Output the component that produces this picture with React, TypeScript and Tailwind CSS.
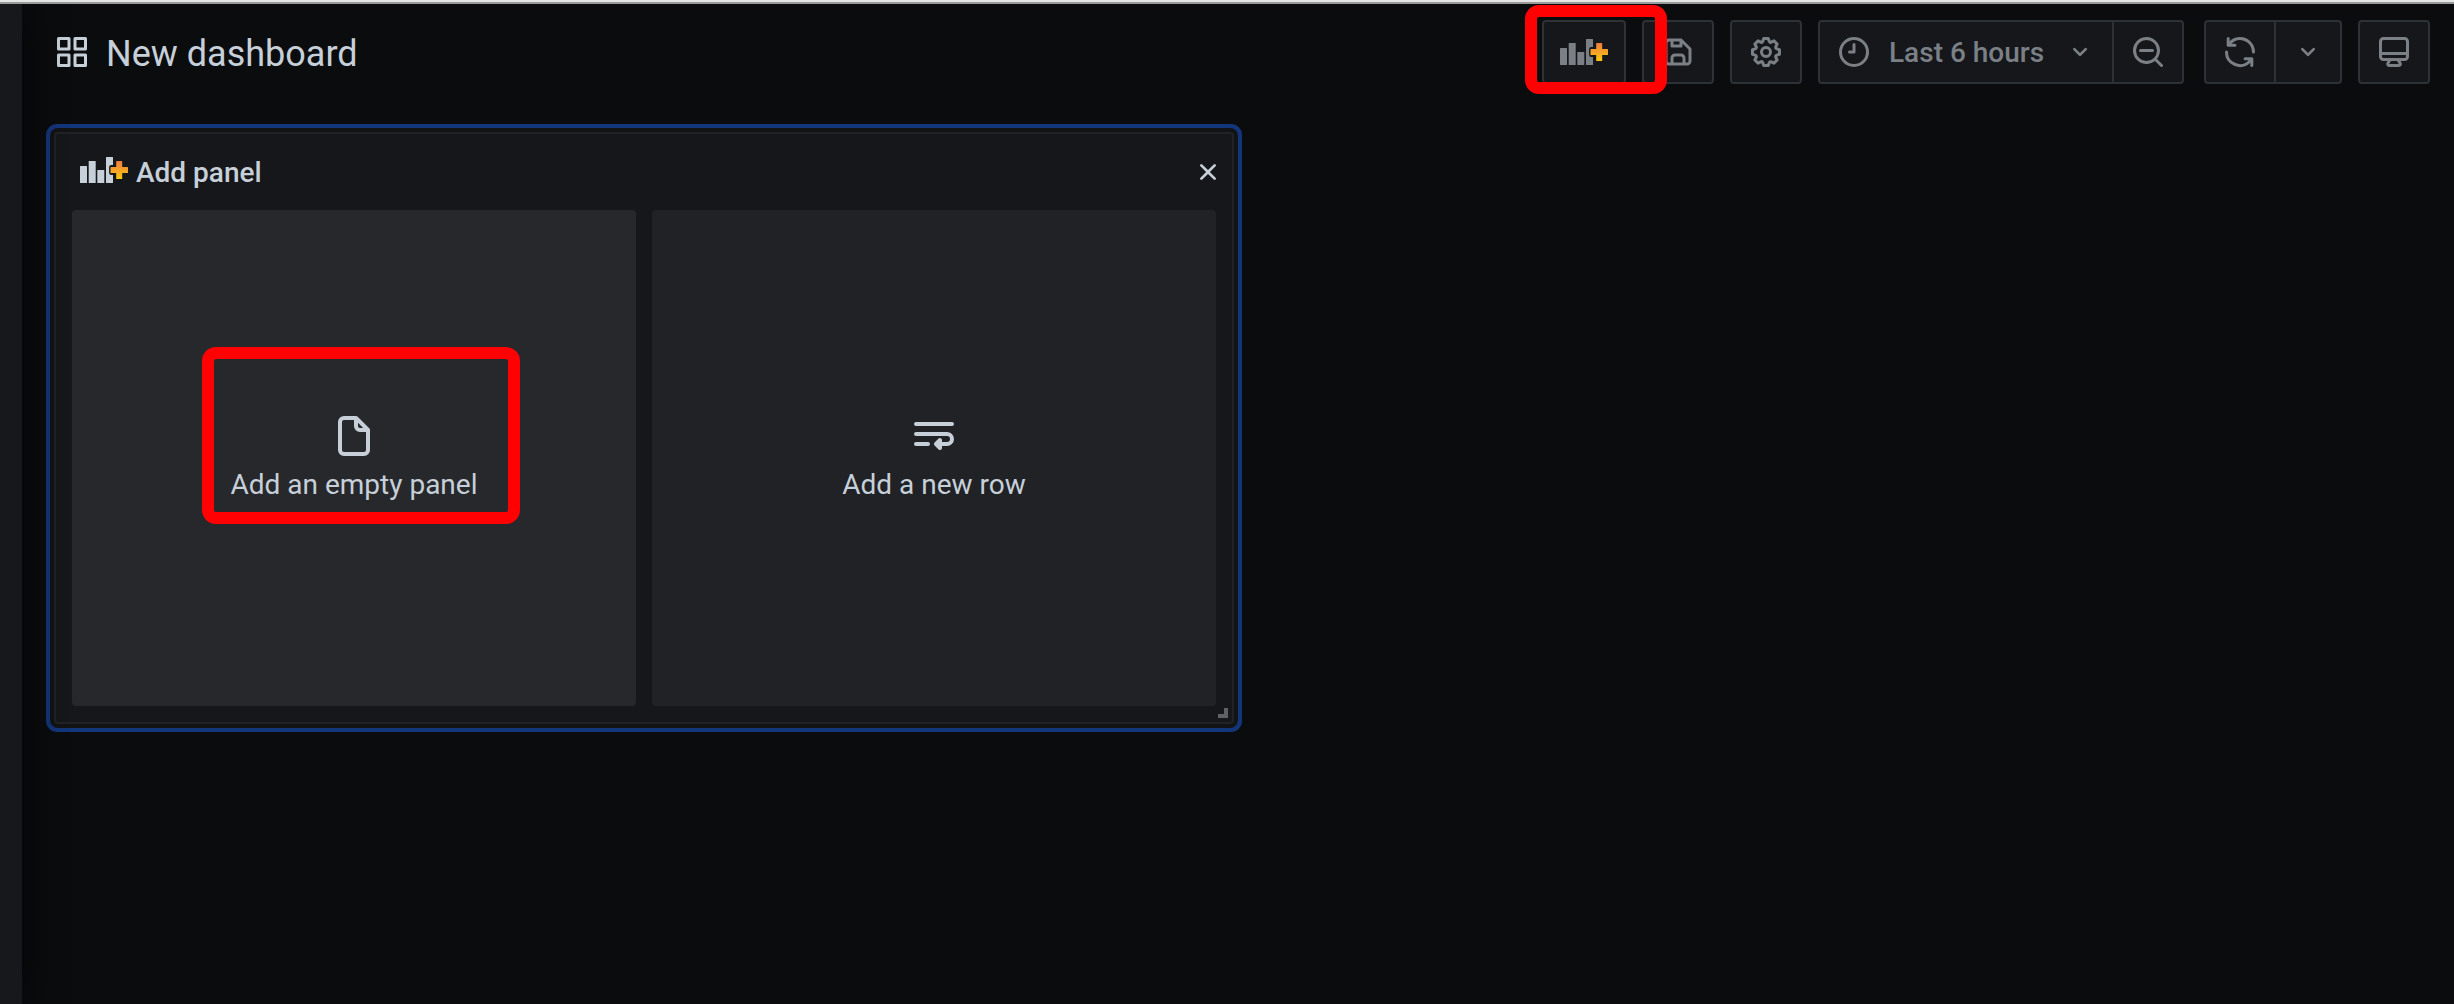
import React from 'react';
import clsx from 'clsx';

const icons = {
  apps: 'M10,13H3a1,1,0,0,0-1,1v7a1,1,0,0,0,1,1h7a1,1,0,0,0,1-1V14A1,1,0,0,0,10,13ZM9,20H4V15H9ZM21,2H14a1,1,0,0,0-1,1v7a1,1,0,0,0,1,1h7a1,1,0,0,0,1-1V3A1,1,0,0,0,21,2ZM20,9H15V4h5Zm1,4H14a1,1,0,0,0-1,1v7a1,1,0,0,0,1,1h7a1,1,0,0,0,1-1V14A1,1,0,0,0,21,13Zm-1,7H15V15h5ZM10,2H3A1,1,0,0,0,2,3v7a1,1,0,0,0,1,1h7a1,1,0,0,0,1-1V3A1,1,0,0,0,10,2ZM9,9H4V4H9Z',
  save: 'M20.71,9.29l-6-6a1,1,0,0,0-.32-.21A1.09,1.09,0,0,0,14,3H6A3,3,0,0,0,3,6V18a3,3,0,0,0,3,3H18a3,3,0,0,0,3-3V10A1,1,0,0,0,20.71,9.29ZM9,5h4V7H9Zm6,14H9V16a1,1,0,0,1,1-1h4a1,1,0,0,1,1,1Zm4-1a1,1,0,0,1-1,1H17V16a3,3,0,0,0-3-3H10a3,3,0,0,0-3,3v3H6a1,1,0,0,1-1-1V6A1,1,0,0,1,6,5H7V8A1,1,0,0,0,8,9h6a1,1,0,0,0,1-1V6.41l4,4Z',
  cog: 'M21.32,9.55l-1.89-.63.89-1.78A1,1,0,0,0,20.13,6L18,3.87a1,1,0,0,0-1.15-.19l-1.78.89-.63-1.89A1,1,0,0,0,13.5,2h-3a1,1,0,0,0-.95.68L8.92,4.57,7.14,3.68A1,1,0,0,0,6,3.87L3.87,6a1,1,0,0,0-.19,1.15l.89,1.78-1.89.63A1,1,0,0,0,2,10.5v3a1,1,0,0,0,.68.95l1.89.63-.89,1.78A1,1,0,0,0,3.87,18L6,20.13a1,1,0,0,0,1.15.19l1.78-.89.63,1.89a1,1,0,0,0,.95.68h3a1,1,0,0,0,.95-.68l.63-1.89,1.78.89A1,1,0,0,0,18,20.13L20.13,18a1,1,0,0,0,.19-1.15l-.89-1.78,1.89-.63A1,1,0,0,0,22,13.5v-3A1,1,0,0,0,21.32,9.55ZM20,12.78l-1.2.4A2,2,0,0,0,17.64,16l.57,1.14-1.1,1.1L16,17.64a2,2,0,0,0-2.79,1.16l-.4,1.2H11.22l-.4-1.2A2,2,0,0,0,8,17.64l-1.14.57-1.1-1.1L6.36,16A2,2,0,0,0,5.2,13.18L4,12.78V11.22l1.2-.4A2,2,0,0,0,6.36,8L5.79,6.89l1.1-1.1L8,6.36A2,2,0,0,0,10.82,5.2l.4-1.2h1.56l.4,1.2A2,2,0,0,0,16,6.36l1.14-.57,1.1,1.1L17.64,8a2,2,0,0,0,1.16,2.79l1.2.4ZM12,8a4,4,0,1,0,4,4A4,4,0,0,0,12,8Zm0,6a2,2,0,1,1,2-2A2,2,0,0,1,12,14Z',
  clock: 'M12,2A10,10,0,1,0,22,12,10,10,0,0,0,12,2Zm0,18a8,8,0,1,1,8-8A8,8,0,0,1,12,20ZM12,6a1,1,0,0,0-1,1v4H9a1,1,0,0,0,0,2h3a1,1,0,0,0,1-1V7A1,1,0,0,0,12,6Z',
  angleDown: 'M17,9.17a1,1,0,0,0-1.41,0L12,12.71,8.46,9.17a1,1,0,0,0-1.41,0,1,1,0,0,0,0,1.42l4.24,4.24a1,1,0,0,0,1.42,0L17,10.59A1,1,0,0,0,17,9.17Z',
  searchMinus: 'M21.71,20.29,18,16.61A9,9,0,1,0,16.61,18l3.68,3.68a1,1,0,0,0,1.42,0A1,1,0,0,0,21.71,20.29ZM11,18a7,7,0,1,1,7-7A7,7,0,0,1,11,18Zm4-8H7a1,1,0,0,0,0,2h8a1,1,0,0,0,0-2Z',
  sync: 'M19.91,15.51H15.38a1,1,0,0,0,0,2h2.4A8,8,0,0,1,4,12a1,1,0,1,0-2,0,10,10,0,0,0,16.88,7.23V21a1,1,0,0,0,2,0V16.5A1,1,0,0,0,19.91,15.51ZM12,2A10,10,0,0,0,5.12,4.77V3a1,1,0,0,0-2,0V7.5a1,1,0,0,0,1,1h4.5a1,1,0,0,0,0-2H6.22A8,8,0,0,1,20,12a1,1,0,0,0,2,0A10,10,0,0,0,12,2Z',
  monitor: 'M19,2H5A3,3,0,0,0,2,5V15a3,3,0,0,0,3,3H7.64l-.58,1a2,2,0,0,0,0,2,2,2,0,0,0,1.75,1h6.46A2,2,0,0,0,17,21a2,2,0,0,0,0-2l-.59-1H19a3,3,0,0,0,3-3V5A3,3,0,0,0,19,2ZM8.77,20,10,18H14l1.2,2ZM20,15a1,1,0,0,1-1,1H5a1,1,0,0,1-1-1V14H20Zm0-3H4V5A1,1,0,0,1,5,4H19a1,1,0,0,1,1,1Z',
  file: 'M20,8.94a1.31,1.31,0,0,0-.06-.27l0-.09a1.07,1.07,0,0,0-.19-.28h0l-6-6h0a1.07,1.07,0,0,0-.28-.19l-.1,0A1.1,1.1,0,0,0,13.06,2H7A3,3,0,0,0,4,5V19a3,3,0,0,0,3,3H17a3,3,0,0,0,3-3V9S20,9,20,8.94ZM14,5.41,16.59,8H15a1,1,0,0,1-1-1ZM18,19a1,1,0,0,1-1,1H7a1,1,0,0,1-1-1V5A1,1,0,0,1,7,4h5V7a3,3,0,0,0,3,3h3Z',
  wrapText: 'M3,7H21a1,1,0,0,0,0-2H3A1,1,0,0,0,3,7ZM9,15H3a1,1,0,0,0,0,2H9a1,1,0,0,0,0-2ZM18.5,10H3a1,1,0,0,0,0,2H18.5a1.5,1.5,0,0,1,0,3H16v-1a1,1,0,0,0-1.71-.71l-2,2a1,1,0,0,0,0,1.42l2,2A1,1,0,0,0,16,18V17h2.5a3.5,3.5,0,0,0,0-7Z',
  times: 'M13.41,12l4.3-4.29a1,1,0,1,0-1.42-1.42L12,10.59,7.71,6.29A1,1,0,0,0,6.29,7.71L10.59,12l-4.3,4.29a1,1,0,0,0,0,1.42,1,1,0,0,0,1.42,0L12,13.41l4.29,4.3a1,1,0,0,0,1.42,0,1,1,0,0,0,0-1.42Z',
};

interface IconProps {
  name: keyof typeof icons;
  className?: string;
}

function Icon({ name, className = 'size-9' }: IconProps) {
  return (
    <svg className={clsx('shrink-0', className)} viewBox="0 0 24 24" fill="currentColor">
      <path d={icons[name]} />
    </svg>
  );
}

interface PanelAddIconProps {
  id: string;
  className?: string;
}

function PanelAddIcon({ id, className }: PanelAddIconProps) {
  return (
    <svg className={clsx('h-[26px] w-12 shrink-0', className)} viewBox="0 0 48 26" fill="currentColor">
      <defs>
        <linearGradient id={id} x1="0" y1="0" x2="0" y2="1">
          <stop offset="0" stopColor="#ee7c41" />
          <stop offset="1" stopColor="#fcc90d" />
        </linearGradient>
      </defs>
      <rect x="0" y="9" width="7" height="17" rx="0.5" />
      <rect x="8.7" y="4" width="7" height="22" rx="0.5" />
      <rect x="17.3" y="13" width="7" height="13" rx="0.5" />
      <path d="M26.5,0H32.5a.5,.5,0,0,1,.5,.5V8H31.3a2.2,2.2,0,0,0-2.2,2.2v5.6a2.2,2.2,0,0,0,2.2,2.2H33v7.5a.5,.5,0,0,1-.5,.5H26.5a.5,.5,0,0,1-.5-.5V.5A.5,.5,0,0,1,26.5,0Z" />
      <path
        fill={`url(#${id})`}
        d="M36.7,4h5a.5,.5,0,0,1,.5,.5V10h5.3a.5,.5,0,0,1,.5,.5v5a.5,.5,0,0,1-.5,.5H42.2v5.5a.5,.5,0,0,1-.5,.5h-5a.5,.5,0,0,1-.5-.5V16H31a.5,.5,0,0,1-.5-.5v-5A.5,.5,0,0,1,31,10h5.2V4.5A.5,.5,0,0,1,36.7,4Z"
      />
    </svg>
  );
}

interface ToolbarButtonProps {
  children: React.ReactNode;
  className?: string;
}

function ToolbarButton({ children, className = 'w-18 rounded' }: ToolbarButtonProps) {
  return (
    <button
      className={clsx(
        'flex h-16 items-center justify-center border-2 border-[#2c3235] bg-[#15171a] text-[#7b8087]',
        className
      )}
    >
      {children}
    </button>
  );
}

function Highlight({ className }: { className: string }) {
  return (
    <div
      className={clsx(
        'pointer-events-none absolute rounded-[14px] border-12 border-[#ff0003]',
        className
      )}
    />
  );
}

function Header() {
  return (
    <header className="flex items-center justify-between pt-4 pr-6 pl-8">
      <div className="flex items-center gap-4 text-[#c7d0d9]">
        <Icon name="apps" />
        <h1 className="pt-[3px] text-4xl leading-none">New dashboard</h1>
      </div>

      <div className="flex items-center">
        <div className="relative mr-4 flex gap-4">
          <ToolbarButton className="w-21 rounded">
            <PanelAddIcon id="toolbar-plus" />
          </ToolbarButton>
          <ToolbarButton>
            <Icon name="save" />
          </ToolbarButton>
          <Highlight className="-top-[15px] -left-[17px] h-[89px] w-[142px]" />
        </div>
        <ToolbarButton className="mr-4 w-18 rounded">
          <Icon name="cog" />
        </ToolbarButton>

        {/* Time range + zoom out */}
        <div className="mr-5 flex">
          <ToolbarButton className="w-74 rounded-l px-4">
            <Icon name="clock" />
            <span className="ml-[17px] flex-1 pt-px text-left text-[28px] leading-none font-medium whitespace-nowrap">
              Last 6 hours
            </span>
            <Icon name="angleDown" className="size-8" />
          </ToolbarButton>
          <ToolbarButton className="-ml-0.5 w-18 rounded-r">
            <Icon name="searchMinus" />
          </ToolbarButton>
        </div>

        {/* Refresh + interval */}
        <div className="mr-4 flex">
          <ToolbarButton className="w-18 rounded-l">
            <Icon name="sync" />
          </ToolbarButton>
          <ToolbarButton className="-ml-0.5 w-17 rounded-r">
            <Icon name="angleDown" className="size-8" />
          </ToolbarButton>
        </div>

        <ToolbarButton>
          <Icon name="monitor" />
        </ToolbarButton>
      </div>
    </header>
  );
}

interface PanelOptionProps {
  icon: keyof typeof icons;
  label: string;
  active?: boolean;
  highlighted?: boolean;
}

function PanelOption({ icon, label, active, highlighted }: PanelOptionProps) {
  return (
    <div
      className={clsx(
        'relative flex flex-1 flex-col items-center justify-center rounded pt-0.5 text-[#c7d0d9]',
        active ? 'bg-[#26282c]' : 'bg-[#202226]'
      )}
    >
      <Icon name={icon} className="size-12" />
      <span className="mt-1 text-[28px] leading-[42px]">{label}</span>
      {highlighted && <Highlight className="top-[137px] left-[130px] h-[177px] w-[318px]" />}
    </div>
  );
}

function AddPanelWidget() {
  return (
    <section className="relative mt-12 ml-8 flex h-[592px] w-[1180px] flex-col rounded border-2 border-[#202226] bg-[#15171a] shadow-[0_0_0_4px_#121315,0_0_0_8px_#13357a]">
      <div className="flex h-19 items-center pr-3.5 pl-6 text-[#c7d0d9]">
        <PanelAddIcon id="widget-plus" className="mb-1" />
        <span className="ml-2 flex-1 pt-0.5 text-[28px] leading-none font-medium">Add panel</span>
        <Icon name="times" className="mr-[-6px] size-8" />
      </div>
      <div className="flex h-[496px] gap-4 px-4">
        <PanelOption icon="file" label="Add an empty panel" active highlighted />
        <PanelOption icon="wrapText" label="Add a new row" />
      </div>
      <span className="absolute right-1 bottom-1 size-2.5 border-r-4 border-b-4 border-[#606163]" />
    </section>
  );
}

export default function App() {
  return (
    <div className="flex h-[1004px] w-[2454px] flex-col overflow-hidden bg-[#0b0c0e] font-[Roboto,sans-serif]">
      <div className="h-1 shrink-0 border-b-2 border-[#999999] bg-[#e6e6e4]" />
      <div className="flex flex-1 overflow-hidden">
        <aside className="z-10 w-[22px] shrink-0 bg-[#17181c] shadow-[0_0_40px_#000000]" />
        <main className="flex-1">
          <Header />
          <AddPanelWidget />
        </main>
      </div>
    </div>
  );
}
